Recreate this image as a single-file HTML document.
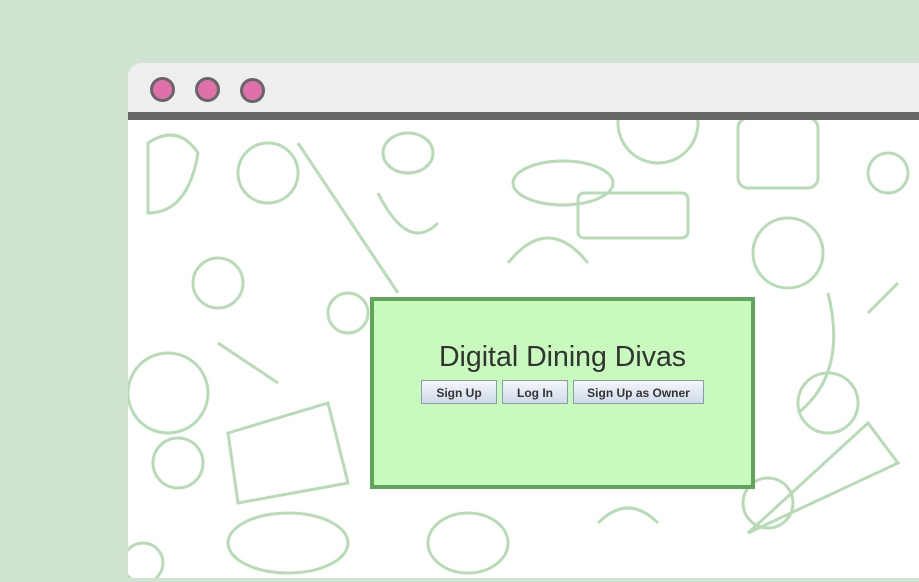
<!DOCTYPE html>
<html><head><style>
body{margin:0;width:919px;height:582px;background:#d0e2d0;position:relative;overflow:hidden;font-family:"Liberation Sans",sans-serif}
.win{position:absolute;left:128px;top:63px;width:800px;height:515px;background:#fff;border-top-left-radius:14px;overflow:hidden}
.tb{position:absolute;left:0;top:0;right:0;height:49px;background:#eeeeee}
.bar{position:absolute;left:0;top:49px;right:0;height:8px;background:#666}
.dot{position:absolute;top:14px;width:19px;height:19px;border-radius:50%;background:#e070aa;border:3px solid #666}
.panel{position:absolute;left:370px;top:297px;width:377px;height:184px;background:#c8f9bd;border:4px solid #5fa55a}
h1{position:absolute;left:0;right:0;top:40px;margin:0;text-align:center;font-weight:normal;font-size:28.5px;color:#333}
.btn{position:absolute;top:79px;height:24px;border:1px solid #8a9ab0;background:linear-gradient(#f4f7fb,#cfdbe9);font:bold 12px "Liberation Sans",sans-serif;color:#333;text-align:center;line-height:24px;box-sizing:border-box}
</style></head><body>
<div class="win">
<svg width="800" height="515" style="position:absolute;left:0;top:0" fill="none" stroke="#b7dcb5" stroke-width="3">
<circle cx="140" cy="110" r="30"/><circle cx="660" cy="190" r="35"/><ellipse cx="40" cy="330" rx="40" ry="40"/>
<rect x="450" y="130" width="110" height="45" rx="6"/><rect x="610" y="55" width="80" height="70" rx="10"/>
<path d="M100 370 L200 340 L220 420 L110 440 Z"/><ellipse cx="435" cy="120" rx="50" ry="22"/>
<circle cx="700" cy="340" r="30"/><path d="M20 80 q30 -20 50 10 q-10 60 -50 60z"/><ellipse cx="280" cy="90" rx="25" ry="20"/>
<path d="M170 80 l100 150"/><circle cx="50" cy="400" r="25"/><ellipse cx="160" cy="480" rx="60" ry="30"/>
<path d="M620 470 l120 -110 l30 40z"/><circle cx="530" cy="60" r="40"/><path d="M380 200 q40 -50 80 0"/>
<circle cx="220" cy="250" r="20"/><path d="M700 230 q20 80 -30 120"/><ellipse cx="340" cy="480" rx="40" ry="30"/>
<circle cx="90" cy="220" r="25"/><path d="M250 130 q30 60 60 30"/><circle cx="760" cy="110" r="20"/><path d="M90 280 l60 40"/>
<circle cx="640" cy="440" r="25"/><path d="M470 460 q30 -30 60 0"/><circle cx="15" cy="500" r="20"/><path d="M740 250 l30 -30"/>
</svg>
<div class="tb"></div><div class="bar"></div>
<div class="dot" style="left:22px"></div><div class="dot" style="left:67px"></div><div class="dot" style="left:112px;top:15px"></div>
</div>
<div class="panel">
<h1>Digital Dining Divas</h1>
<div class="btn" style="left:47px;width:76px">Sign Up</div>
<div class="btn" style="left:128px;width:66px">Log In</div>
<div class="btn" style="left:199px;width:131px">Sign Up as Owner</div>
</div>
</body></html>
